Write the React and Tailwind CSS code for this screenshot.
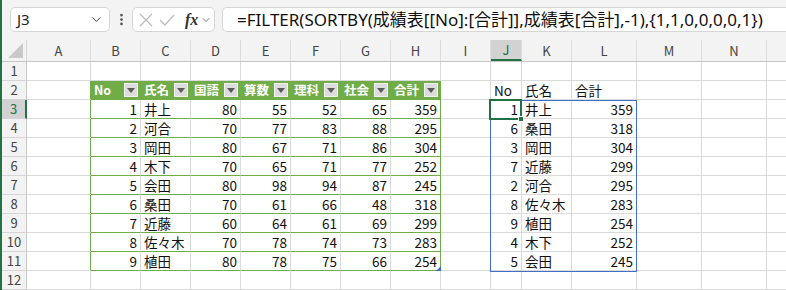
import { ChevronDown, EllipsisVertical } from 'lucide-react';

const cols = [
  { k: 'A', w: 'w-[64px]' },
  { k: 'B', w: 'w-[50px]' },
  { k: 'C', w: 'w-[50px]' },
  { k: 'D', w: 'w-[50px]' },
  { k: 'E', w: 'w-[50px]' },
  { k: 'F', w: 'w-[50px]' },
  { k: 'G', w: 'w-[50px]' },
  { k: 'H', w: 'w-[50px]' },
  { k: 'I', w: 'w-[50px]' },
  { k: 'J', w: 'w-[31px]' },
  { k: 'K', w: 'w-[50px]' },
  { k: 'L', w: 'w-[65px]' },
  { k: 'M', w: 'w-[65px]' },
  { k: 'N', w: 'w-[65px]' },
  { k: 'O', w: 'w-[65px]' },
];

const headers = ['No', '氏名', '国語', '算数', '理科', '社会', '合計'];

const scores = [
  [1, '井上', 80, 55, 52, 65, 359],
  [2, '河合', 70, 77, 83, 88, 295],
  [3, '岡田', 80, 67, 71, 86, 304],
  [4, '木下', 70, 65, 71, 77, 252],
  [5, '会田', 80, 98, 94, 87, 245],
  [6, '桑田', 70, 61, 66, 48, 318],
  [7, '近藤', 60, 64, 61, 69, 299],
  [8, '佐々木', 70, 78, 74, 73, 283],
  [9, '植田', 80, 78, 75, 66, 254],
];

// sorted by 合計 desc, only No / 氏名 / 合計
const result = [...scores].sort((a, b) => b[6] - a[6]).map(r => [r[0], r[1], r[6]]);

const tableCols = ['B', 'C', 'D', 'E', 'F', 'G', 'H'];

function FilterButton() {
  return (
    <span className="w-[14px] h-[14px] shrink-0 bg-[#dcdcdc] border border-[#f2f2f2] flex items-center justify-center">
      <svg width="8" height="5" viewBox="0 0 8 5">
        <path d="M0 0 L8 0 L4 5 Z" fill="#5a5a5a" />
      </svg>
    </span>
  );
}

function cellFor(r, k) {
  const ti = tableCols.indexOf(k);
  if (r === 2 && ti >= 0) {
    return { header: true, text: headers[ti] };
  }
  if (r >= 3 && r <= 11 && ti >= 0) {
    const v = scores[r - 3][ti];
    return { text: v, right: typeof v === 'number' };
  }
  const ri = ['J', 'K', 'L'].indexOf(k);
  if (r === 2 && ri >= 0) return { text: ['No', '氏名', '合計'][ri] };
  if (r >= 3 && r <= 11 && ri >= 0) {
    const v = result[r - 3][ri];
    return { text: v, right: typeof v === 'number' };
  }
  return { text: '' };
}

function Row({ r }) {
  const selected = r === 3;
  return (
    <div className="flex h-[19px]">
      <div
        className={`w-[25px] shrink-0 border-b border-[#d5d5d5] flex items-center justify-center text-[13px] ${
          selected
            ? 'bg-[#d2d2d2] border-r-2 border-r-[#217346] text-[#217346]'
            : 'bg-[#f3f3f3] border-r border-r-[#c6c6c6] text-[#444]'
        }`}
      >
        {r}
      </div>
      {cols.map(({ k, w }) => {
        const c = cellFor(r, k);
        const inTable = r >= 2 && r <= 11 && tableCols.includes(k);
        const edge = r >= 2 && r <= 11 && (k === 'A' || k === 'H');
        const right = edge || (r === 2 && inTable) ? 'border-r-[#70ad47]' : 'border-r-[#dadada]';
        const bottom = inTable ? 'border-b-[#70ad47]' : 'border-b-[#dadada]';
        return (
          <div
            key={k}
            className={`${w} shrink-0 h-full border-r border-b ${right} ${bottom} flex items-center px-[3px] overflow-visible whitespace-nowrap text-[13.5px] leading-[18px] ${
              c.header ? 'bg-[#70ad47] justify-between pr-[2px] text-white font-bold' : ''
            } ${c.right ? 'justify-end' : ''}`}
          >
            {c.header ? (
              <>
                <span className="text-[12.5px]">{c.text}</span>
                <FilterButton />
              </>
            ) : (
              c.text
            )}
          </div>
        );
      })}
    </div>
  );
}

function FormulaBar() {
  return (
    <div className="h-[40px] bg-[#f3f3f3] flex items-start pt-[7px] pl-[8px]">
      <div className="w-[100px] h-[25px] bg-white border border-[#d6d6d6] rounded-[5px] flex items-center justify-between pl-[6px] pr-[5px]">
        <span className="text-[15px] text-[#222]">J3</span>
        <ChevronDown size={15} strokeWidth={1.6} className="text-[#444]" />
      </div>
      <div className="w-[22px] h-[25px] flex items-center justify-center">
        <EllipsisVertical size={15} strokeWidth={2.4} className="text-[#555]" />
      </div>
      <div className="w-[83px] h-[25px] bg-white border border-[#d6d6d6] rounded-[5px] flex items-center pl-[6px] gap-[6px]">
        <svg width="14" height="14" viewBox="0 0 14 14">
          <path d="M1 1 L13 13 M13 1 L1 13" stroke="#bcbcbc" strokeWidth="1.3" fill="none" />
        </svg>
        <svg width="16" height="14" viewBox="0 0 16 14">
          <path d="M1 7 L6 12 L15 2" stroke="#bcbcbc" strokeWidth="1.3" fill="none" />
        </svg>
        <span className="ml-[4px] text-[16px] italic font-bold text-[#333] leading-none" style={{ fontFamily: '"Liberation Serif", serif' }}>
          fx
        </span>
        <ChevronDown size={12} strokeWidth={1.6} className="text-[#555] -ml-[4px]" />
      </div>
      <div className="ml-[7px] flex-1 h-[25px] bg-white border border-[#d6d6d6] border-r-0 rounded-l-[5px] flex items-center pl-[14px] text-[17px] text-[#111] whitespace-nowrap overflow-hidden">
        =FILTER(SORTBY(成績表[[No]:[合計]],成績表[合計],-1),{'{'}1,1,0,0,0,0,1{'}'})
      </div>
    </div>
  );
}

function ColumnHeaders() {
  return (
    <div className="flex h-[22px] bg-[#f3f3f3] border-b border-[#c6c6c6]">
      <div className="w-[25px] shrink-0 border-r border-[#d5d5d5] flex items-end justify-end pr-[3px] pb-[3px]">
        <svg width="15" height="15" viewBox="0 0 15 15">
          <path d="M15 0 L15 15 L0 15 Z" fill="#c9c9c9" />
        </svg>
      </div>
      {cols.map(({ k, w }) => (
        <div
          key={k}
          className={`${w} shrink-0 border-r border-[#dcdcdc] flex items-center justify-center text-[13px] ${
            k === 'J' ? 'bg-[#d2d2d2] border-b-2 border-b-[#217346] text-[#217346]' : 'text-[#444]'
          }`}
        >
          {k === 'O' ? '' : k}
        </div>
      ))}
    </div>
  );
}

export default function App() {
  return (
    <div
      className="w-[786px] h-[290px] overflow-hidden bg-white border-l-2 border-[#217346] text-[#111]"
      style={{ fontFamily: '"Noto Sans", "Noto Sans CJK JP", sans-serif' }}
    >
      <FormulaBar />
      <div className="relative" style={{ fontFamily: '"Noto Sans CJK JP", "Noto Sans", sans-serif' }}>
        <ColumnHeaders />
        {Array.from({ length: 12 }, (_, i) => (
          <Row key={i} r={i + 1} />
        ))}
        {/* spill range outline J3:L11 */}
        <div className="absolute left-[488px] top-[60px] w-[147px] h-[172px] border border-[#3f6fc6] pointer-events-none" />
        {/* active cell J3 */}
        <div className="absolute left-[487px] top-[59px] w-[33px] h-[21px] border-2 border-[#217346] pointer-events-none" />
        <div className="absolute left-[516px] top-[76px] w-[6px] h-[6px] bg-[#217346] border border-white pointer-events-none" />
        {/* table resize handle */}
        <div className="absolute left-[434px] top-[226px] w-0 h-0 border-l-[5px] border-l-transparent border-b-[5px] border-b-[#3f6fc6] pointer-events-none" />
      </div>
    </div>
  );
}
